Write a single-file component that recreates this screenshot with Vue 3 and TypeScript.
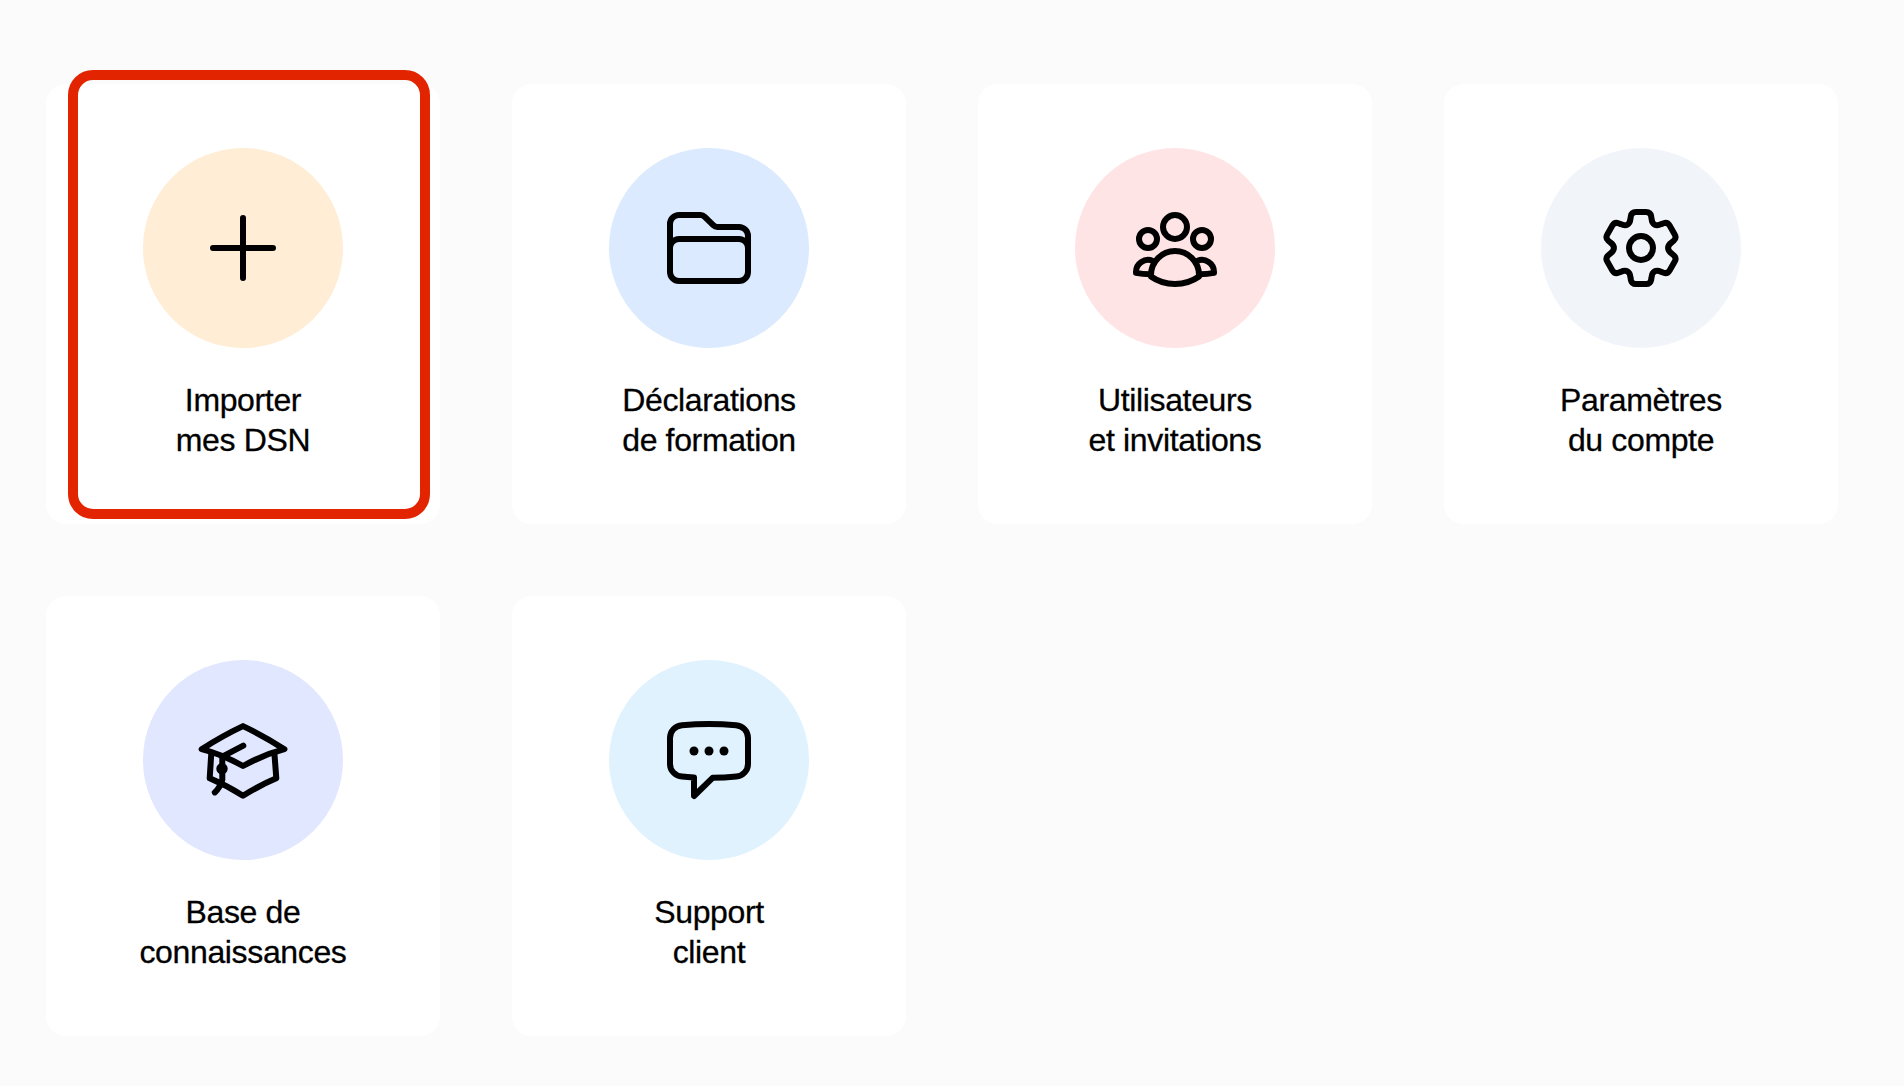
<template>
  <main class="dashboard">
    <a v-for="tile in tiles" :key="tile.icon" class="card" href="#" @click.prevent="select(tile)">
      <span class="circle" :class="tile.color">
        <svg class="icon" viewBox="0 0 32 32">
          <path v-if="tile.icon === 'plus'" d="M16 6v20M6 16h20" />
          <g v-else-if="tile.icon === 'folder'">
            <path d="M6 5h7.17a2 2 0 0 1 1.42.59l2.82 2.82a2 2 0 0 0 1.42.59H26a3 3 0 0 1 3 3v12a3 3 0 0 1-3 3H6a3 3 0 0 1-3-3V8a3 3 0 0 1 3-3z" />
            <path d="M3 16a3 3 0 0 1 3-3h20a3 3 0 0 1 3 3" />
          </g>
          <g v-else-if="tile.icon === 'users'">
            <circle cx="16" cy="9" r="4" />
            <circle cx="7" cy="13" r="3" />
            <circle cx="25" cy="13" r="3" />
            <path d="M8 25a8 8 0 0 1 16 0v.5c-4.6 3.3-11.4 3.3-16 0z" />
            <path d="M8.6 20.3A4 4 0 0 0 3 24v.3c1.4.3 3 .45 4.8.45" />
            <path d="M23.4 20.3A4 4 0 0 1 29 24v.3c-1.4.3-3 .45-4.8.45" />
          </g>
          <g v-else-if="tile.icon === 'gear'">
            <circle cx="16" cy="16" r="4" />
            <path :d="gearPath" />
          </g>
          <g v-else-if="tile.icon === 'cap'">
            <path d="M16 4.7Q22.8 7.9 29.8 12.4Q22.8 14.2 16 18Q9.2 14.2 2.2 12.4Q9.2 7.9 16 4.7z" />
            <path d="M5.4 14.2L4.9 22.1Q10.4 24.4 16 27.9Q21.6 24.4 27.1 22.1L26.5 14.2" />
            <path d="M16.1 11.2L9.1 14.9V22.6Q8.4 25.2 6.6 26.8" />
            <circle class="solid" cx="9" cy="18.9" r="1.9" />
          </g>
          <g v-else>
            <path d="M7 4.4c6-.53 12-.53 18 0 2.3.2 4 2 4 4.3v8.6c0 2.2-1.7 4-3.9 4.2-2.6.25-5.2.4-7.9.45L11 28v-6.2c-1.4-.06-2.7-.15-4-.3-2.3-.2-4-2-4-4.2V8.7c0-2.3 1.7-4.1 4-4.3z" />
            <circle class="solid" cx="11" cy="13" r="1.5" />
            <circle class="solid" cx="16" cy="13" r="1.5" />
            <circle class="solid" cx="21" cy="13" r="1.5" />
          </g>
        </svg>
      </span>
      <span v-for="line in tile.label" :key="line" class="line">{{ line }}</span>
      <span v-if="selected === tile.icon" class="highlight"></span>
    </a>
  </main>
</template>

<script lang="ts" setup>
import { ref, Ref } from 'vue';

interface ITile{
  icon: string;
  color: string;
  label: Array<string>;
}

const tiles: Array<ITile> = [
  { icon: 'plus', color: 'orange', label: ['Importer', 'mes DSN'] },
  { icon: 'folder', color: 'blue', label: ['Déclarations', 'de formation'] },
  { icon: 'users', color: 'rose', label: ['Utilisateurs', 'et invitations'] },
  { icon: 'gear', color: 'slate', label: ['Paramètres', 'du compte'] },
  { icon: 'cap', color: 'indigo', label: ['Base de', 'connaissances'] },
  { icon: 'chat', color: 'sky', label: ['Support', 'client'] },
];

let selected: Ref<string> = ref('plus');

const select = (tile: ITile) => {
  selected.value = tile.icon;
}

// one notch of the gear, repeated every 60 degrees around (16, 16)
const notch = [
  [11.24, -4.53], [11.95, -3.3], [10.9, -2.4],
  [10.3, -1.9], [8.6, -0.7], [8.6, 0.7], [10.3, 1.9],
  [10.9, 2.4], [11.95, 3.3], [11.24, 4.53],
];

const buildGear = () => {
  let d = '';
  for (let i = 0; i < 6; i++) {
    const a = i * Math.PI / 3;
    const p = notch.map(([x, y]) => {
      const px = 16 + x * Math.cos(a) - y * Math.sin(a);
      const py = 16 + x * Math.sin(a) + y * Math.cos(a);
      return `${px.toFixed(2)} ${py.toFixed(2)}`;
    });
    d += `${i === 0 ? 'M' : 'L'}${p[0]}Q${p[1]} ${p[2]}L${p[3]}C${p[4]} ${p[5]} ${p[6]}L${p[7]}Q${p[8]} ${p[9]}`;
  }
  return d + 'z';
}

const gearPath = buildGear();
</script>

<style>
body{
  margin: 0;
  background: #fbfbfb;
}
</style>

<style scoped>
*{
  box-sizing: border-box;
}
.dashboard{
  display: grid;
  grid-template-columns: repeat(4, 394px);
  grid-auto-rows: 440px;
  gap: 72px;
  min-height: 1086px;
  padding: 84px 46px 50px;
  font-family: "Liberation Sans", Arial, sans-serif;
}
.card{
  position: relative;
  display: flex;
  flex-direction: column;
  align-items: center;
  padding-top: 64px;
  border-radius: 20px;
  background: #fff;
  color: #000;
  text-decoration: none;
}
.circle{
  display: flex;
  align-items: center;
  justify-content: center;
  width: 200px;
  height: 200px;
  margin-bottom: 32px;
  border-radius: 50%;
}
.orange{
  background: #ffedd5;
}
.blue{
  background: #dbeafe;
}
.rose{
  background: #ffe4e6;
}
.slate{
  background: #f1f5f9;
}
.indigo{
  background: #e0e7ff;
}
.sky{
  background: #e0f2fe;
}
.icon{
  width: 96px;
  height: 96px;
  fill: none;
  stroke: #000;
  stroke-width: 2;
  stroke-linecap: round;
  stroke-linejoin: round;
}
.solid{
  fill: #000;
  stroke: none;
}
.line{
  font-size: 32px;
  line-height: 40px;
  letter-spacing: -0.36px;
  -webkit-text-stroke: 0.3px #000;
}
.highlight{
  position: absolute;
  top: -14px;
  left: 22px;
  width: 362px;
  height: 449px;
  border: 10px solid #e32400;
  border-radius: 25px;
  pointer-events: none;
}
</style>
